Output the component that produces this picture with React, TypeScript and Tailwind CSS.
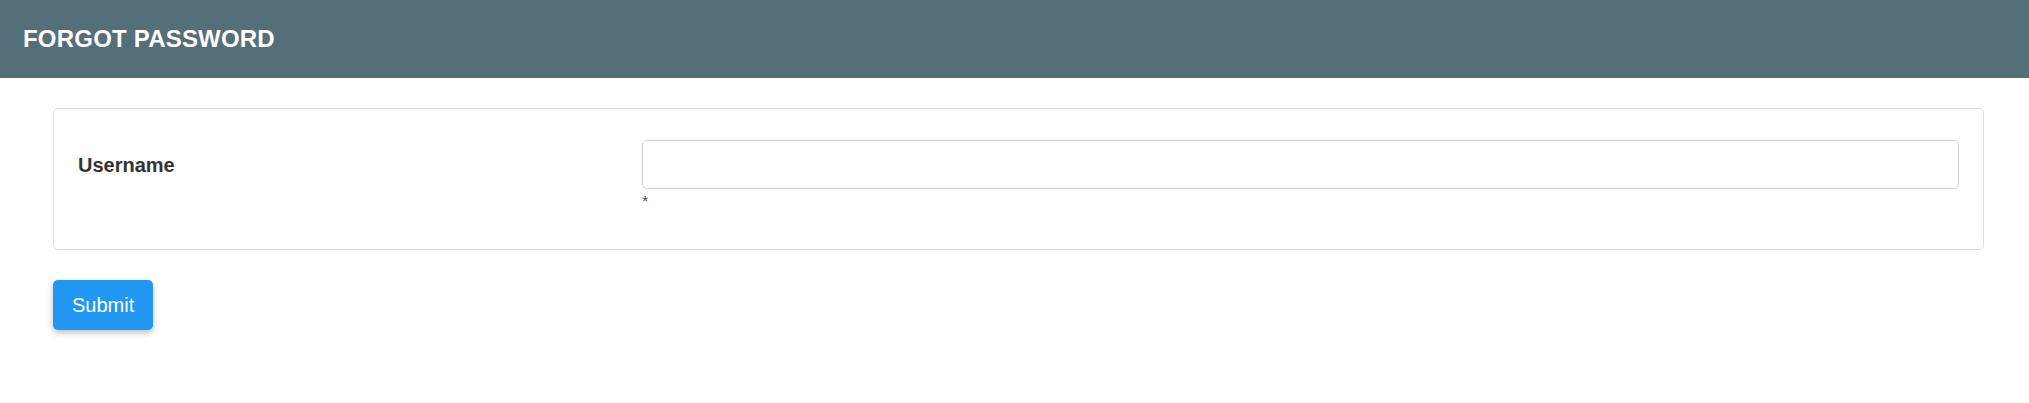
export default function App() {
  return (
    <div className="min-h-[403px] w-full bg-white font-['Liberation_Sans',Arial,sans-serif]">
      <header className="flex h-[78px] items-center bg-[#546e7a] px-[23px]">
        <h1 className="text-[24px] font-bold leading-none tracking-[0.2px] text-white">FORGOT PASSWORD</h1>
      </header>

      <main className="ml-[53px] mr-[45px] pt-[30px]">
        <form onSubmit={(e) => e.preventDefault()}>
          <div className="rounded-[5px] border border-[#dedede] px-[24px] pb-[40px] pt-[31px]">
            <div className="grid grid-cols-[30%_70%]">
              <label
                htmlFor="username"
                className="flex h-[49px] items-center text-[20px] font-bold text-[#333333]"
              >
                Username
              </label>
              <div>
                <input
                  id="username"
                  type="text"
                  className="block h-[49px] w-full rounded-[5px] border border-[#cfd1d6] px-3 text-[18px] outline-none"
                />
                <div className="mt-[4px] text-[15px] leading-[16px] text-[#444444]">*</div>
              </div>
            </div>
          </div>

          <button
            type="submit"
            className="mt-[30px] h-[50px] rounded-[5px] bg-[#2196f3] px-[19px] text-[20px] text-white shadow-[0_3px_6px_rgba(0,0,0,0.25)]"
          >
            Submit
          </button>
        </form>
      </main>
    </div>
  );
}
